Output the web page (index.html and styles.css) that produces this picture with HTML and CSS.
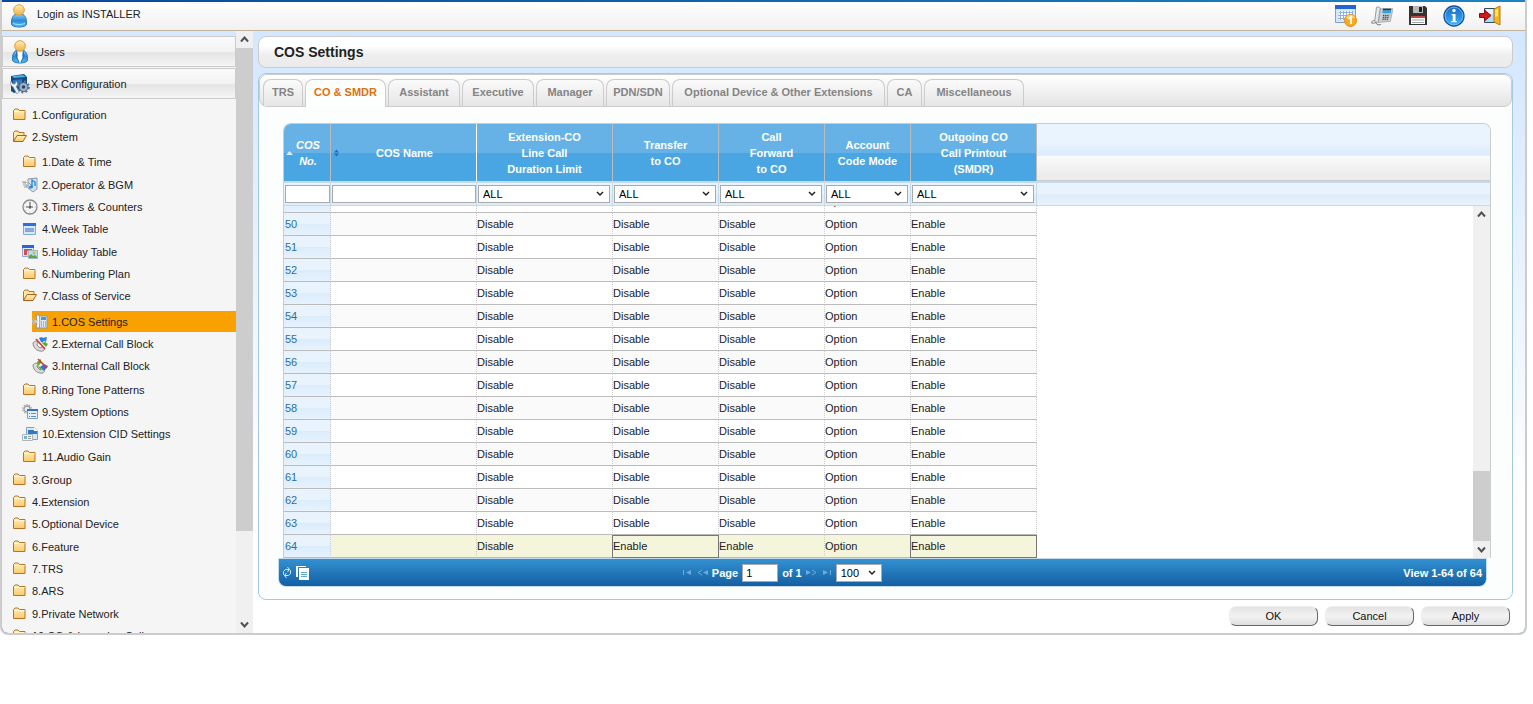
FILE: index.html
```html
<!DOCTYPE html>
<html lang="en">
<head>
<meta charset="utf-8">
<title>COS Settings</title>
<link rel="stylesheet" href="styles.css">
</head>
<body>
<svg class="sprite" aria-hidden="true">
  <defs>
    <linearGradient id="gBlue" x1="0" y1="0" x2="0" y2="1"><stop offset="0" stop-color="#8fd0f8"/><stop offset=".5" stop-color="#2f8ad6"/><stop offset="1" stop-color="#4fc4f4"/></linearGradient>
    <linearGradient id="gSkin" x1="0" y1="0" x2="0" y2="1"><stop offset="0" stop-color="#ffeeb4"/><stop offset="1" stop-color="#efb045"/></linearGradient>
    <linearGradient id="gFold" x1="0" y1="0" x2="0" y2="1"><stop offset="0" stop-color="#fff0bd"/><stop offset="1" stop-color="#fbc968"/></linearGradient>
    <linearGradient id="gInfo" x1="0" y1="0" x2="0" y2="1"><stop offset="0" stop-color="#1767c6"/><stop offset="1" stop-color="#3fb2fa"/></linearGradient>
  </defs>
  <symbol id="person" viewBox="0 0 20 24">
    <path d="M2.500 20C2 15 4 11 7 10h6c3 1 5 5 4.500 10 0 4-15 4-15 0z" fill="url(#gBlue)" stroke="#2a76b5"/>
    <path d="M4 19c2 2 10 2 12 0" fill="none" stroke="#8fe6ff"/>
    <circle cx="10" cy="6" r="5.300" fill="url(#gSkin)" stroke="#dca03d"/>
  </symbol>
  <symbol id="user" viewBox="0 0 20 24">
    <path d="M2.500 20C2 15 4 11 7 10h6c3 1 5 5 4.500 10 0 4-15 4-15 0z" fill="url(#gBlue)" stroke="#2a76b5"/>
    <path d="M7 11h6l-1 4 1 4-3 4-3-4 1-4z" fill="#fff"/><path d="M7 11l-1 5 3 6m4-11l1 5-3 6" stroke="#2363a0" fill="none"/>
    <circle cx="10" cy="6" r="5.300" fill="url(#gSkin)" stroke="#dca03d"/>
  </symbol>
  <symbol id="pbx" viewBox="0 0 20 22">
    <path d="M1 3l13-2 3 3v12L4 20l-3-2z" fill="#17497f"/><path d="M2 3l11-1 3 2-12 1z" fill="#43b4ee"/>
    <path d="M3 7l9-1v6l-9 2z" fill="#2b77bb"/>
    <circle cx="13.500" cy="14" r="5.400" fill="none" stroke="#5f7b9c" stroke-width="2" stroke-dasharray="2.200 2"/><circle cx="13.500" cy="14" r="4.500" fill="#9eb2ca" stroke="#3e5d82"/><circle cx="13.500" cy="14" r="1.800" fill="#2b4467"/>
    <path d="M1 8l2 3h2l1-3c3 3 1 5 0 5l3 6-2 2-4-7c-2-1-3-3-2-6z" fill="#eef3fa" stroke="#6583a4" stroke-width=".6"/>
  </symbol>
  <symbol id="folder" viewBox="0 0 16 16">
    <path d="M1.500 12.500v-9l1.500-1.500h3l1.500 1.500h5.500v9z" fill="url(#gFold)" stroke="#b57427"/><path d="M2 4.500h10.500" stroke="#fff6d8"/>
  </symbol>
  <symbol id="open" viewBox="0 0 16 16">
    <path d="M1.500 12.500v-9l1.500-1.500h3l1 1.500h5v3" fill="#ffe9aa" stroke="#b57427"/><path d="M1.500 12.500l3.500-6h9.500l-3.500 6z" fill="url(#gFold)" stroke="#a9641d"/>
  </symbol>
  <symbol id="music" viewBox="0 0 16 16">
    <path d="M6 2l9-1v11l-4 3-5-4z" fill="#d6e4f2" stroke="#8b9aaa"/><path d="M0 5h4v1H1m0 2h4v2H2m4-5l4 4-4 3" fill="none" stroke="#95999d"/>
    <path d="M10 10V3l3 2v4" fill="none" stroke="#238be6" stroke-width="1.400"/><ellipse cx="9" cy="10" rx="2" ry="1.500" fill="#238be6"/>
  </symbol>
  <symbol id="clock" viewBox="0 0 16 16">
    <circle cx="8" cy="8" r="7" fill="#f5f5f5" stroke="#8a8a8a" stroke-width="1.300"/><circle cx="8" cy="8" r="5.200" fill="none" stroke="#c4c4c4" stroke-dasharray="1 2.900"/><path d="M8 3v7M4 8h7" stroke="#55504c"/><circle cx="8" cy="8" r="1" fill="#6b4b40"/>
  </symbol>
  <symbol id="week" viewBox="0 0 16 16">
    <path d="M1.500 2.500h12v11h-12z" fill="#d8e9fb" stroke="#86a9d2"/><path d="M1 2h13v3H1z" fill="#2c6fdb"/><path d="M3 7h9v4H3z" fill="#79a9de"/><path d="M3 9h9" stroke="#9cb1c8"/>
  </symbol>
  <symbol id="holiday" viewBox="0 0 16 16">
    <path d="M.5 1.500h11v11H.5z" fill="#dceafa" stroke="#8daad2"/><path d="M0 1h12v3H0z" fill="#2c66d4"/><path d="M2 5h8v2H5v4H2z" fill="#df4949"/>
    <path d="M6.500 6.500h9v8h-9z" fill="#aee1f7" stroke="#a5b3bf"/><path d="M7 14v-2l2-2 2 2 2-1 2 2v1z" fill="#5aaa36"/><circle cx="12" cy="9" r="1.300" fill="#f6a628"/>
  </symbol>
  <symbol id="phoneset" viewBox="0 0 16 16">
    <path d="M6 2h9v12H6z" fill="#e3ebf3" stroke="#8d99a5"/><path d="M4 1h3c1 1 1 12 0 13H4c1-2 1-11 0-13z" fill="#f6f8fa" stroke="#8b96a1"/><path d="M9 3h5v3H9z" fill="#4b9ad6"/><path d="M9 8h5M9 10h5M9 12h5" stroke="#5684b0" stroke-dasharray="1 1"/><path d="M0 5l2 2.500L0 10m1-2.500h4" fill="none" stroke="#d5d8da" stroke-width="2"/><path d="M0 5l2 2.500L0 10" fill="none" stroke="#85898c" stroke-width=".8"/>
  </symbol>
  <symbol id="extblock" viewBox="0 0 16 16">
    <path d="M1 7c2-3 5-2 5 0l-1 2 3 3 2-1c3 0 3 3 1 4C7 16 1 13 1 7z" fill="#dadada" stroke="#8c8c8c"/><path d="M7 2l3-1 2 3-3 2z" fill="#2d78d9"/><path d="M10 2l5-1-1 5-2-1-2 2-1-2 2-2z" fill="#3384de"/><path d="M10 7l4 4 2-3-3-2z" fill="#5ab02c"/><path d="M4 3l9 10" stroke="#cf3a32" stroke-width="1.600"/>
  </symbol>
  <symbol id="intblock" viewBox="0 0 16 16">
    <path d="M1 7c2-3 5-2 5 0l-1 2 3 3 2-1c3 0 3 3 1 4C7 16 1 13 1 7z" fill="#dadada" stroke="#8c8c8c"/><path d="M5 4l4-3v4L6 8z" fill="#58aa2b"/><path d="M8 9l4-3 4 2-4 5z" fill="#2d78d9"/><path d="M5 8l4 1v3z" fill="#54ae28"/><path d="M6 1l9 9" stroke="#cf3a32" stroke-width="1.600"/>
  </symbol>
  <symbol id="options" viewBox="0 0 16 16">
    <circle cx="5" cy="5" r="4.300" fill="none" stroke="#aaa" stroke-width="1.300" stroke-dasharray="1.500 1.200"/><circle cx="5" cy="5" r="3" fill="#eee" stroke="#999" stroke-width="1.300"/><path d="M5.500 5.500h10v9h-10z" fill="#e5f1fd" stroke="#7d9dc8"/><path d="M5 5h11v2H5z" fill="#2d72d9"/><path d="M9 9.500h5M9 12.500h5" stroke="#5791c7"/><path d="M7 9.500h1M7 12.500h1" stroke="#32a43a"/>
  </symbol>
  <symbol id="cid" viewBox="0 0 16 16">
    <path d="M4.500 1.500h8l3 3v9h-11z" fill="#d8eafa" stroke="#7ca2c8"/><path d="M6 4h9v4H6z" fill="#2f79ca"/><path d="M12 1l4 4h-4z" fill="#fff"/><path d="M.5 8.500h10v6H.5z" fill="#f4f4f4" stroke="#b0b5ba"/><path d="M2 10h3v3H2z" fill="#74b4dc"/><path d="M6 10.500h3M6 12.500h3" stroke="#999"/>
  </symbol>
  <symbol id="calendar" viewBox="0 0 22 22">
    <path d="M.5.500h20v17H.5z" fill="#d7e7fa" stroke="#80a3d6"/><path d="M0 0h21v4H0z" fill="#2366d3"/><path d="M4 6h14v9H4z" fill="#fff"/><path d="M5.500 6v9M8.500 6v9M11.500 6v7M14.500 6v4M17.500 6v4M4 7.500h14M3 10.500h9M3 13.500h8" stroke="#8fb0dc"/>
    <circle cx="15.500" cy="15.500" r="6" fill="#f8ab20" stroke="#e18a12"/><path d="M11.500 13a5 5 0 0 1 8 0" stroke="#ffd873" fill="none" stroke-width="2"/><path d="M13.500 14l2.500-2v7" fill="none" stroke="#fff" stroke-width="1.800"/>
  </symbol>
  <symbol id="deskphone" viewBox="0 0 24 22">
    <path d="M10 3h14l-3 14-13 1z" fill="#ced2d6" stroke="#979da3" stroke-width=".8"/><path d="M13 3h9v2h-9z" fill="#1c3556"/><path d="M12.500 5h9.500l-.5 3h-9z" fill="#27a5e2"/><path d="M13 9h8l-2 7h-7z" fill="#b3b8bc"/><path d="M13 10.500h6M13 12.500h6M12.500 14.500h6" stroke="#333" stroke-dasharray="1.400 1"/><path d="M6 1.500c2-1 4 0 4 1.500L8 17c0 1-3 1-4 0z" fill="#e6e9ec" stroke="#8d949a"/><path d="M4 16c-4 0-4 3-2 3s3-2 4 0 3 2 5 1" fill="none" stroke="#84898e" stroke-width="1.100"/>
  </symbol>
  <symbol id="floppy" viewBox="0 0 22 22">
    <path d="M2 1h16l2 2v17H2z" fill="#333"/><path d="M6 1h10v7H6z" fill="#b9b9b9"/><path d="M12 2h3v5h-3z" fill="#222"/><path d="M4 11h14v8H4z" fill="#fff"/><path d="M4 11h14v2H4z" fill="#c2453f"/><path d="M5 15h12M5 17.500h12" stroke="#9ea3a6"/>
  </symbol>
  <symbol id="info" viewBox="0 0 22 22">
    <circle cx="11" cy="11" r="10" fill="url(#gInfo)" stroke="#145196" stroke-width="1.300"/><circle cx="11" cy="11" r="8.800" fill="none" stroke="#6ec7ff" stroke-width=".8"/><circle cx="11" cy="5.500" r="1.700" fill="#fff"/><path d="M8.500 9H12.500v7h1.500v1.300H8V16h1.700v-5.700H8.500z" fill="#fff"/>
  </symbol>
  <symbol id="exit" viewBox="0 0 22 22">
    <path d="M5.500 3.500h13v14h-13z" fill="#aedbf3" stroke="#2f4a70"/><path d="M7 4h7v5H7z" fill="#e4f4fc"/><path d="M15 4l6-3v19l-6-3z" fill="#f5b51d" stroke="#b07a18"/><path d="M16 5l3-1v7l-3 1z" fill="#ffe07a"/><path d="M.5 8.500h5V5l6.500 5.500L5.500 16v-3.500h-5z" fill="#cd1c1c" stroke="#861010"/>
  </symbol>
  <symbol id="up" viewBox="0 0 17 17"><path d="M5 10.500l3.500-4 3.500 4" fill="none" stroke="#505050" stroke-width="2"/></symbol>
  <symbol id="down" viewBox="0 0 17 17"><path d="M5 6.500l3.500 4 3.500-4" fill="none" stroke="#505050" stroke-width="2"/></symbol>
</svg>

<div class="app">
  <header class="topbar">
    <svg class="avatar"><use href="#person"/></svg>
    <span class="login">Login as INSTALLER</span>
    <nav class="tools" aria-label="Tools">
      <button type="button" aria-label="Schedule"><svg><use href="#calendar"/></svg></button>
      <button type="button" aria-label="Phone"><svg><use href="#deskphone"/></svg></button>
      <button type="button" aria-label="Save"><svg><use href="#floppy"/></svg></button>
      <button type="button" aria-label="Information"><svg><use href="#info"/></svg></button>
      <button type="button" aria-label="Log out"><svg><use href="#exit"/></svg></button>
    </nav>
  </header>
  <div class="workspace">
    <aside class="sidebar">
      <nav class="menu" aria-label="Main">
        <a class="section" href="#"><svg><use href="#user"/></svg>Users</a>
        <a class="section" href="#"><svg><use href="#pbx"/></svg>PBX Configuration</a>
        <ul class="tree">
          <li><a href="#"><svg><use href="#folder"/></svg>1.Configuration</a></li>
          <li><a href="#"><svg><use href="#open"/></svg>2.System</a>
            <ul class="level2">
              <li><a href="#"><svg><use href="#folder"/></svg>1.Date &amp; Time</a></li>
              <li><a href="#"><svg><use href="#music"/></svg>2.Operator &amp; BGM</a></li>
              <li><a href="#"><svg><use href="#clock"/></svg>3.Timers &amp; Counters</a></li>
              <li><a href="#"><svg><use href="#week"/></svg>4.Week Table</a></li>
              <li><a href="#"><svg><use href="#holiday"/></svg>5.Holiday Table</a></li>
              <li><a href="#"><svg><use href="#folder"/></svg>6.Numbering Plan</a></li>
              <li><a href="#"><svg><use href="#open"/></svg>7.Class of Service</a>
                <ul class="level3">
                  <li><a class="current" href="#"><svg><use href="#phoneset"/></svg>1.COS Settings</a></li>
                  <li><a href="#"><svg><use href="#extblock"/></svg>2.External Call Block</a></li>
                  <li><a href="#"><svg><use href="#intblock"/></svg>3.Internal Call Block</a></li>
                </ul>
              </li>
              <li><a href="#"><svg><use href="#folder"/></svg>8.Ring Tone Patterns</a></li>
              <li><a href="#"><svg><use href="#options"/></svg>9.System Options</a></li>
              <li><a href="#"><svg><use href="#cid"/></svg>10.Extension CID Settings</a></li>
              <li><a href="#"><svg><use href="#folder"/></svg>11.Audio Gain</a></li>
            </ul>
          </li>
          <li><a href="#"><svg><use href="#folder"/></svg>3.Group</a></li>
          <li><a href="#"><svg><use href="#folder"/></svg>4.Extension</a></li>
          <li><a href="#"><svg><use href="#folder"/></svg>5.Optional Device</a></li>
          <li><a href="#"><svg><use href="#folder"/></svg>6.Feature</a></li>
          <li><a href="#"><svg><use href="#folder"/></svg>7.TRS</a></li>
          <li><a href="#"><svg><use href="#folder"/></svg>8.ARS</a></li>
          <li><a href="#"><svg><use href="#folder"/></svg>9.Private Network</a></li>
          <li><a href="#"><svg><use href="#folder"/></svg>10.CO &amp; Incoming Call</a></li>
        </ul>
      </nav>
      <div class="scrollbar" aria-hidden="true"><svg><use href="#up"/></svg><div class="track menu-track"><div class="thumb"></div></div><svg><use href="#down"/></svg></div>
    </aside>

    <main class="main">
      <h1 class="title">COS Settings</h1>
      <section class="panel">
        <div class="tabs" role="tablist">
          <button type="button" role="tab">TRS</button>
          <button type="button" role="tab" class="active" aria-selected="true">CO &amp; SMDR</button>
          <button type="button" role="tab">Assistant</button>
          <button type="button" role="tab">Executive</button>
          <button type="button" role="tab">Manager</button>
          <button type="button" role="tab">PDN/SDN</button>
          <button type="button" role="tab">Optional Device &amp; Other Extensions</button>
          <button type="button" role="tab">CA</button>
          <button type="button" role="tab">Miscellaneous</button>
        </div>

        <div class="grid">
          <div class="grid-head">
            <table class="cells">
              <colgroup><col class="c-no"><col class="c-name"><col class="c-limit"><col class="c-trans"><col class="c-trans"><col class="c-mode"><col class="c-print"></colgroup>
              <thead>
                <tr class="heads">
                  <th scope="col"><div class="sorter"><svg viewBox="0 0 7 8"><path d="M0 6l3.500-4 3.500 4z" fill="#d7ebfa"/></svg><em>COS<br>No.</em></div></th>
                  <th scope="col" class="bright"><div class="sorter"><svg viewBox="0 0 7 8"><path d="M1 3.500L3.500.500 6 3.500zM1 4.500h5L3.500 7.500z" fill="#1d72c0"/></svg><span>COS Name</span></div></th>
                  <th scope="col">Extension-CO<br>Line Call<br>Duration Limit</th>
                  <th scope="col">Transfer<br>to CO</th>
                  <th scope="col">Call<br>Forward<br>to CO</th>
                  <th scope="col">Account<br>Code Mode</th>
                  <th scope="col">Outgoing CO<br>Call Printout<br>(SMDR)</th>
                </tr>
                <tr class="filters">
                  <td><input type="text" aria-label="Filter COS No."></td>
                  <td><input type="text" aria-label="Filter COS Name"></td>
                  <td><select aria-label="Filter duration limit"><option>ALL</option></select></td>
                  <td><select aria-label="Filter transfer to CO"><option>ALL</option></select></td>
                  <td><select aria-label="Filter call forward to CO"><option>ALL</option></select></td>
                  <td><select aria-label="Filter account code mode"><option>ALL</option></select></td>
                  <td><select aria-label="Filter call printout"><option>ALL</option></select></td>
                </tr>
              </thead>
            </table>
            <div class="head-rest"><div class="rest-top"></div><div class="rest-filter"></div></div>
          </div>
          <div class="grid-body">
            <div class="viewport">
              <table class="cells rows">
                <colgroup><col class="c-no"><col class="c-name"><col class="c-limit"><col class="c-trans"><col class="c-trans"><col class="c-mode"><col class="c-print"></colgroup>
                <tbody>
                  <tr><th scope="row">49</th><td></td><td>Disable</td><td>Disable</td><td>Disable</td><td>Option</td><td>Enable</td></tr>
                  <tr><th scope="row">50</th><td></td><td>Disable</td><td>Disable</td><td>Disable</td><td>Option</td><td>Enable</td></tr>
                  <tr><th scope="row">51</th><td></td><td>Disable</td><td>Disable</td><td>Disable</td><td>Option</td><td>Enable</td></tr>
                  <tr><th scope="row">52</th><td></td><td>Disable</td><td>Disable</td><td>Disable</td><td>Option</td><td>Enable</td></tr>
                  <tr><th scope="row">53</th><td></td><td>Disable</td><td>Disable</td><td>Disable</td><td>Option</td><td>Enable</td></tr>
                  <tr><th scope="row">54</th><td></td><td>Disable</td><td>Disable</td><td>Disable</td><td>Option</td><td>Enable</td></tr>
                  <tr><th scope="row">55</th><td></td><td>Disable</td><td>Disable</td><td>Disable</td><td>Option</td><td>Enable</td></tr>
                  <tr><th scope="row">56</th><td></td><td>Disable</td><td>Disable</td><td>Disable</td><td>Option</td><td>Enable</td></tr>
                  <tr><th scope="row">57</th><td></td><td>Disable</td><td>Disable</td><td>Disable</td><td>Option</td><td>Enable</td></tr>
                  <tr><th scope="row">58</th><td></td><td>Disable</td><td>Disable</td><td>Disable</td><td>Option</td><td>Enable</td></tr>
                  <tr><th scope="row">59</th><td></td><td>Disable</td><td>Disable</td><td>Disable</td><td>Option</td><td>Enable</td></tr>
                  <tr><th scope="row">60</th><td></td><td>Disable</td><td>Disable</td><td>Disable</td><td>Option</td><td>Enable</td></tr>
                  <tr><th scope="row">61</th><td></td><td>Disable</td><td>Disable</td><td>Disable</td><td>Option</td><td>Enable</td></tr>
                  <tr><th scope="row">62</th><td></td><td>Disable</td><td>Disable</td><td>Disable</td><td>Option</td><td>Enable</td></tr>
                  <tr><th scope="row">63</th><td></td><td>Disable</td><td>Disable</td><td>Disable</td><td>Option</td><td>Enable</td></tr>
                  <tr class="selected"><th scope="row">64</th><td></td><td>Disable</td><td class="edited">Enable</td><td>Enable</td><td>Option</td><td class="edited">Enable</td></tr>
                </tbody>
              </table>
            </div>
            <div class="scrollbar" aria-hidden="true"><svg><use href="#up"/></svg><div class="track grid-track"><div class="thumb"></div></div><svg><use href="#down"/></svg></div>
          </div>
        </div>

        <div class="pager">
          <div class="pager-tools">
            <button type="button" aria-label="Reload"><svg class="reload" viewBox="0 0 10 13"><path d="M7.500 3.500h-4l-2 2v3l1 1M2.500 9.500h4l2-2v-3l-1-1M5.500 1l2 2.500-2 2.500M4.500 7l-2 2.500 2 2.500" fill="none" stroke="#d3e8f8"/></svg></button>
            <button type="button" aria-label="Copy"><svg class="copy" viewBox="0 0 13 14"><path d="M0 0h10v1H2v10H0z" fill="#fff"/><path d="M3 2h10v12H3z" fill="#fff"/><path d="M5 6.500h6M5 8.500h6M5 10.500h6" stroke="#5da7dc"/></svg></button>
          </div>
          <div class="pager-nav">
            <button type="button" aria-label="First page"><svg viewBox="0 0 11 7"><path d="M1.500 1v5" stroke="#6daade"/><path d="M9 1v5L4 3.500z" fill="#6daade"/></svg></button>
            <button type="button" aria-label="Previous page"><svg viewBox="0 0 11 7"><path d="M5 1L1 3.500 5 6" fill="none" stroke="#6daade"/><path d="M11 1v5L6 3.500z" fill="#6daade"/></svg></button>
            <label class="page-label">Page <input type="text" value="1"></label>
            <span>of 1</span>
            <button type="button" aria-label="Next page"><svg viewBox="0 0 11 7"><path d="M0 1v5l5-2.500z" fill="#6daade"/><path d="M6 1l4 2.500L6 6" fill="none" stroke="#6daade"/></svg></button>
            <button type="button" aria-label="Last page"><svg viewBox="0 0 11 7"><path d="M2 1v5l5-2.500z" fill="#6daade"/><path d="M9.500 1v5" stroke="#6daade"/></svg></button>
            <select aria-label="Rows per page"><option>100</option></select>
          </div>
          <div class="pager-view">View 1-64 of 64</div>
        </div>
      </section>
      <div class="actions">
        <button type="button">OK</button>
        <button type="button">Cancel</button>
        <button type="button">Apply</button>
      </div>
    </main>
  </div>
</div>
</body>
</html>
```
FILE: styles.css
```css
* { box-sizing: border-box; }
body {
  margin: 0;
  background: #fff;
  color: #222;
  font: 11px/16px "Liberation Sans", Arial, sans-serif;
}
button, input, select { margin: 0; font: inherit; color: inherit; }
button { padding: 0; border: 0; background: none; cursor: pointer; }
a { color: inherit; text-decoration: none; }
svg { display: block; flex: none; }
.sprite { position: absolute; width: 0; height: 0; }

.app {
  display: flex;
  flex-direction: column;
  height: calc(100vh - 69px);
  margin-right: 6px;
  padding-top: 2px;
  border: 2px solid #ccc;
  border-top: 0;
  border-radius: 0 0 8px 8px;
  background: linear-gradient(90deg, #07489c, #1c84c4);
  overflow: hidden;
}

/* Top bar */
.topbar {
  display: flex;
  align-items: center;
  height: 29px;
  flex: none;
  padding: 0 24px 0 7px;
  border-bottom: 1px solid #c2b59b;
  background: linear-gradient(#fff, #f1f1f1);
}
.avatar { width: 20px; height: 24px; }
.login { padding: 0 0 4px 8px; }
.tools { display: flex; gap: 14px; margin-left: auto; }
.tools svg { width: 22px; height: 22px; }

.workspace { display: flex; flex: 1; min-height: 0; }

/* Sidebar */
.sidebar { display: flex; width: 251px; flex: none; background: #f5f5f5; }
.menu {
  flex: 1;
  min-width: 0;
  overflow: hidden;
  border-top: 5px solid #d5e8fd;
}
.section {
  display: flex;
  align-items: center;
  gap: 6px;
  height: 31px;
  margin-bottom: 1px;
  padding-left: 7px;
  border: 1px solid #ccc;
  background: linear-gradient(#fafafa 0, #f2f2f2 50%, #e4e4e4 52%, #f5f5f5 100%);
}
.section svg { width: 20px; height: 24px; }
.tree, .tree ul { margin: 0; padding: 0; list-style: none; }
.tree { padding: 4px 0 0 10px; }
.tree .level2 { padding-left: 10px; margin: 3px 0 1px; }
.tree .level3 { padding-left: 10px; margin: 4px 0 2px; }
.tree a { display: flex; align-items: center; gap: 4px; height: 22px; white-space: nowrap; }
.tree > li:nth-child(3n+2) > a,
.level2 > li:nth-child(3n+1) > a { margin-bottom: 1px; }
.tree svg { width: 16px; height: 16px; }
.tree .current { background: #f9a100; height: 21px; margin-bottom: 1px; }

/* Scroll bars */
.scrollbar { display: flex; flex-direction: column; width: 17px; flex: none; background: #f0f0f0; }
.scrollbar svg { width: 17px; height: 17px; }
.track { display: flex; flex-direction: column; flex: 1; }
.thumb { background: #cdcdcd; }
.menu-track .thumb { height: 85%; }
.grid-track { justify-content: flex-end; }
.grid-track .thumb { height: 22%; }

/* Main column */
.main {
  display: flex;
  flex-direction: column;
  flex: 1;
  min-width: 0;
  padding: 5px 12px 0 5px;
  background: linear-gradient(#d3e7fe, #fff 80%);
}
.title {
  margin: 0 0 5px;
  padding: 7px 15px;
  border: 1px solid #ccc;
  border-radius: 8px;
  background: linear-gradient(#fff 30%, #eee 60%, #ebebeb);
  font-size: 14px;
  line-height: 16px;
}
.panel {
  display: flex;
  flex-direction: column;
  flex: 1;
  min-height: 0;
  padding-bottom: 12px;
  border: 1px solid #a6c9e2;
  border-radius: 8px;
  background: #fcfefd;
}
.tabs {
  display: grid;
  grid-template-columns: 40px 81px 72px 72px 68px 64px 213px 35px 100px;
  gap: 2px;
  padding: 4px 3px 0;
  border: 1px solid #ccc;
  border-radius: 8px;
  background: linear-gradient(#fff, #e4e4e4);
}
.tabs button {
  height: 27px;
  padding-bottom: 2px;
  border: 1px solid #ccc;
  border-bottom: 0;
  border-radius: 8px 8px 0 0;
  background: linear-gradient(#fafafa, #e6e6e6);
  color: #848484;
  font-weight: bold;
  white-space: nowrap;
}
.tabs .active {
  height: 28px;
  margin-bottom: -1px;
  padding-bottom: 3px;
  background: #fdfefe;
  color: #e17009;
}

/* Data grid */
.grid {
  display: flex;
  flex-direction: column;
  flex: 1;
  min-height: 0;
  margin: 16px 21px 0 24px;
  border: 1px solid #ccc;
  border-bottom: 0;
  border-radius: 8px 8px 0 0;
  background: #fff;
  overflow: hidden;
}
.grid-head { display: flex; flex: none; }
.cells { width: 753px; flex: none; table-layout: fixed; border-collapse: separate; border-spacing: 0; }
.c-no { width: 47px; }
.c-name { width: 146px; }
.c-limit { width: 136px; }
.c-trans { width: 106px; }
.c-mode { width: 86px; }
.c-print { width: 126px; }
.heads th {
  height: 57px;
  padding: 0;
  border-right: 1px solid #bbb;
  background: linear-gradient(#66b2e6 50%, #4aa5e3 50%);
  color: #fff;
  font-weight: bold;
}
.heads .bright { border-right-color: #fff; }
.sorter { display: grid; grid-template-columns: 7px 1fr 7px; align-items: center; padding-left: 2px; }
.sorter svg { width: 7px; height: 8px; }
.filters td {
  height: 25px;
  padding: 2px 2px 2px 1px;
  border: 1px solid #c5dbec;
  border-left: 0;
  border-top-width: 2px;
  background: linear-gradient(#e8f3fd 50%, #dfedfa 50%);
}
.filters td:nth-child(-n+2) { padding-right: 0; }
.filters input, .filters select, .pager input, .pager select {
  display: block;
  width: 100%;
  height: 18px;
  padding: 0 4px;
  border: 1px solid #aaa;
  border-radius: 0;
  background: #fff;
  color: #000;
}
.filters select, .pager select {
  appearance: none;
  background: #fff url("data:image/svg+xml,%3Csvg xmlns='http://www.w3.org/2000/svg' width='8' height='6'%3E%3Cpath d='M1 1l3 3 3-3' fill='none' stroke='%23222' stroke-width='1.5'/%3E%3C/svg%3E") no-repeat right 5px center;
}
.head-rest { display: flex; flex-direction: column; flex: 1; }
.rest-top {
  height: 57px;
  border-bottom: 1px solid #ccc;
  background: linear-gradient(#e9f4fe 0, #e9f4fe 32%, #dcecfb 56%, #fafafa 57%, #ececed 90%);
}
.rest-filter {
  flex: 1;
  border: solid #c5dbec;
  border-width: 2px 0 1px;
  background: linear-gradient(#e8f3fd 50%, #dfedfa 50%, #e6f2fd);
}
.grid-body { display: flex; flex: 1; min-height: 0; }
.viewport { display: flex; align-items: flex-end; flex: 1; min-width: 0; overflow: hidden; }
.rows th, .rows td {
  height: 23px;
  padding: 0;
  border-right: 1px dotted #ccc;
  border-bottom: 1px solid #bbb;
  font-weight: normal;
  text-align: left;
}
.rows th { padding-left: 1px; background: linear-gradient(#e9f3fe 50%, #dcecfb 50%, #e6f2fe); color: #2e6e9e; }
.rows tr:nth-child(even) td { background: #fafafa; }
.rows tr.selected td { background: #f5f5dc; }
.rows tr.selected .edited { border-right: 1px solid #777; border-bottom-color: #777; box-shadow: -1px 0 #777, inset 0 1px #777; }

/* Pager */
.pager {
  display: grid;
  grid-template-columns: 2fr auto 3fr;
  align-items: center;
  height: 29px;
  flex: none;
  margin: 0 25px 0 19px;
  border: 1px solid #c5dbec;
  border-radius: 0 0 8px 8px;
  background: linear-gradient(#3291d1, #145fa2);
  color: #fff;
  font-weight: bold;
}
.pager-tools { display: flex; align-items: center; gap: 4px; padding-left: 3px; }
.reload { width: 10px; height: 13px; }
.copy { width: 13px; height: 14px; }
.pager-nav { display: flex; align-items: center; gap: 4px; }
.pager-nav svg { width: 11px; height: 7px; }
.page-label { display: flex; align-items: center; gap: 4px; }
.pager-nav input { width: 36px; font-weight: normal; padding: 0 3px; }
.pager-nav select { width: 46px; font-weight: normal; }
.pager-view { padding-right: 4px; text-align: right; }

/* Form actions */
.actions { display: flex; justify-content: flex-end; gap: 7px; flex: none; padding: 6px 3px 7px; }
.actions button {
  width: 89px;
  height: 20px;
  border: 1px solid #eee;
  border-right-color: #666;
  border-bottom-color: #666;
  border-radius: 7px;
  background: linear-gradient(#e3e3e3, #f2f2f2 50%, #dfdfdf);
  color: #111;
}
```
